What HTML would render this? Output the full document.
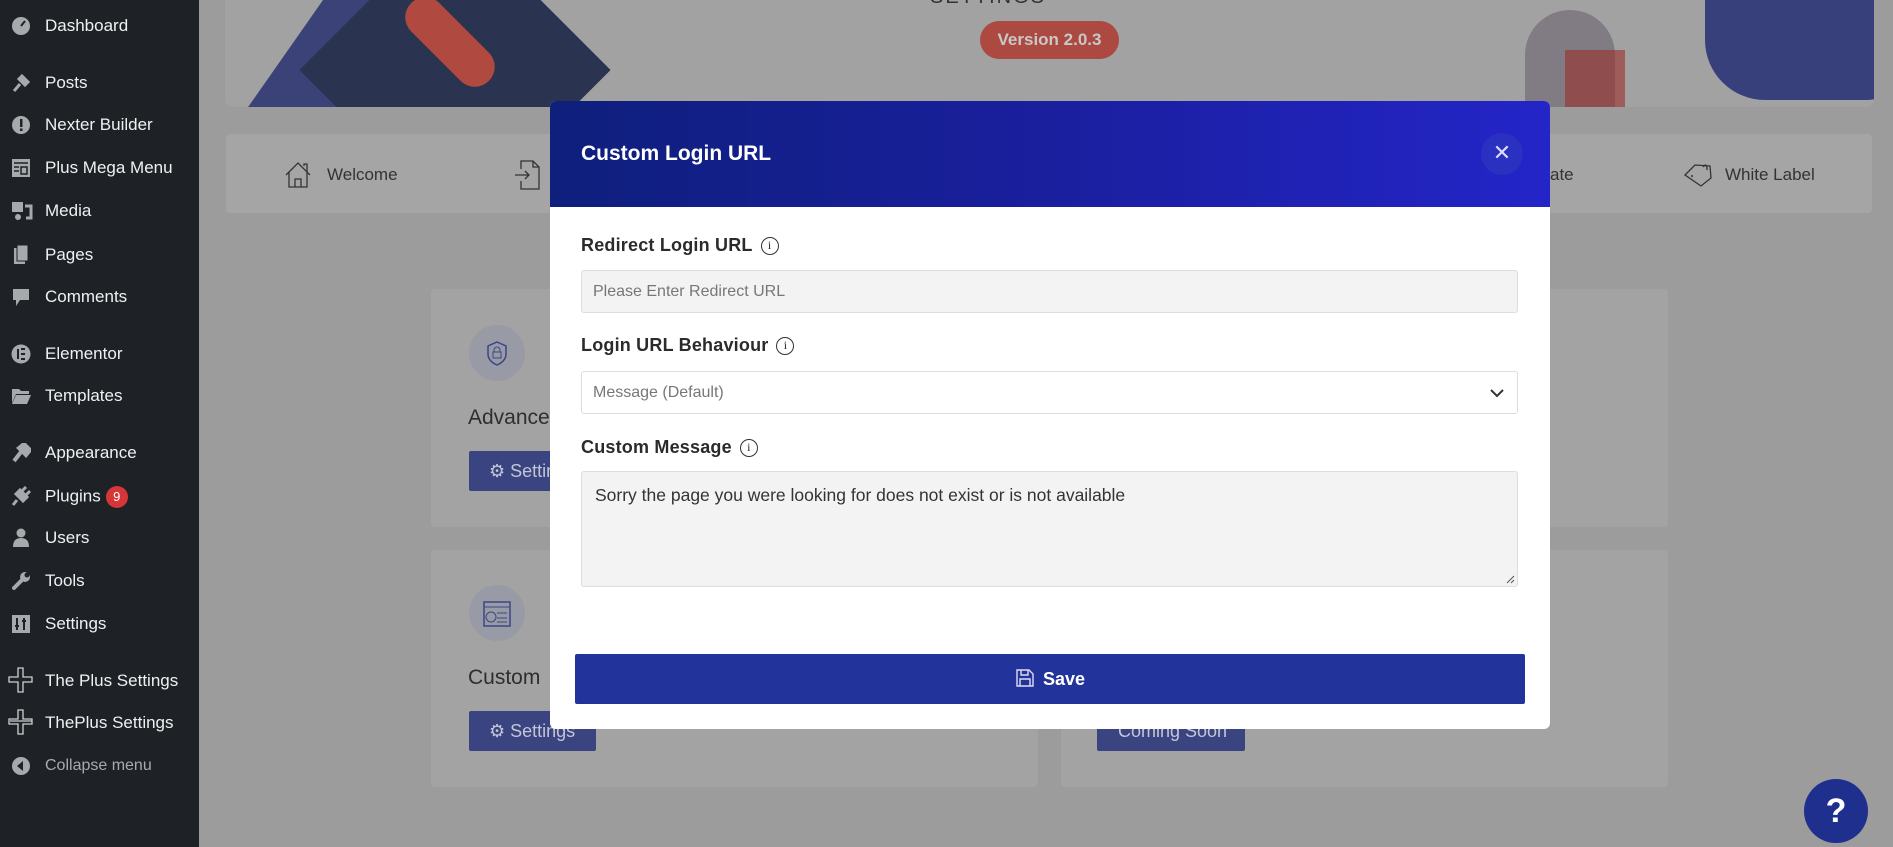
<!DOCTYPE html>
<html><head><meta charset="utf-8"><style>
*{box-sizing:border-box;margin:0;padding:0}
body{width:1893px;height:847px;overflow:hidden;background:#9c9c9c;font-family:"Liberation Sans",sans-serif;position:relative}
#sb{position:absolute;left:0;top:0;width:199px;height:847px;background:#1e2226}
.mi{position:absolute;left:45px;color:#f0f0f1;font-size:17px;line-height:20px;transform:translateY(-9px);white-space:nowrap}
.ic{position:absolute;left:11px;width:22px;height:20px;transform:translateY(-9px);color:#a7aaad}
.badge{display:inline-block;background:#d63638;color:#fff;border-radius:11px;font-size:13px;width:22px;height:22px;text-align:center;line-height:22px;margin-left:5px;vertical-align:middle}
.abs{position:absolute}
.card{position:absolute;background:#a3a3a3;border-radius:4px}
.circ{position:absolute;width:56px;height:56px;border-radius:50%;background:#989aa6}
.btn{position:absolute;background:#3a4480;color:#c4c6d6;font-size:18px;border-radius:2px;line-height:40px;padding-left:20px}
.lbl{position:absolute;left:31px;font-size:18px;font-weight:bold;color:#2b2b2b;letter-spacing:0.2px}
.info{display:inline-block;width:18px;height:18px;border:1.5px solid #333;border-radius:50%;font-size:12px;text-align:center;line-height:15px;font-family:"Liberation Serif",serif;margin-left:8px;vertical-align:2px;font-weight:normal}
.fld{position:absolute;left:31px;width:937px;border:1px solid #ddd;border-radius:3px;font-size:16px;color:#777;padding-left:11px}
</style></head><body>
<div id="sb">
<div class="ic" style="top:25px"><svg width="20" height="20"><circle cx="10" cy="10" r="9" fill="#a7aaad"/><path d="M10 10 L14 5" stroke="#1e2226" stroke-width="2"/></svg></div><div class="mi" style="top:25px">Dashboard</div>
<div class="ic" style="top:82px"><svg width="20" height="20"><path d="M3 18 L9 11 M8 6 L14 12 L17 9 L11 3Z" stroke="#a7aaad" stroke-width="3" fill="#a7aaad"/></svg></div><div class="mi" style="top:82px">Posts</div>
<div class="ic" style="top:124px"><svg width="20" height="20"><circle cx="10" cy="10" r="9" fill="#a7aaad"/><rect x="9" y="4" width="2.5" height="8" fill="#1e2226"/><rect x="9" y="13.5" width="2.5" height="2.5" fill="#1e2226"/></svg></div><div class="mi" style="top:124px">Nexter Builder</div>
<div class="ic" style="top:167px"><svg width="20" height="20"><rect x="1" y="1" width="18" height="18" fill="#a7aaad"/><path d="M3 5h14M3 9h5M3 13h5M10 9h6v7h-6z" stroke="#1e2226" stroke-width="1.5" fill="none"/></svg></div><div class="mi" style="top:167px">Plus Mega Menu</div>
<div class="ic" style="top:210px"><svg width="22" height="20"><rect x="1" y="1" width="11" height="10" fill="#a7aaad"/><path d="M14 5h6v12h-5" stroke="#a7aaad" stroke-width="3" fill="none"/><circle cx="7" cy="16" r="3" fill="#a7aaad"/></svg></div><div class="mi" style="top:210px">Media</div>
<div class="ic" style="top:254px"><svg width="20" height="20"><rect x="3" y="3" width="11" height="16" fill="#a7aaad"/><rect x="6" y="0" width="11" height="16" fill="#a7aaad" stroke="#1e2226"/></svg></div><div class="mi" style="top:254px">Pages</div>
<div class="ic" style="top:296px"><svg width="20" height="20"><path d="M2 2h16v11H9l-4 6v-6H2z" fill="#a7aaad"/></svg></div><div class="mi" style="top:296px">Comments</div>
<div class="ic" style="top:353px"><svg width="20" height="20"><circle cx="10" cy="10" r="9.5" fill="#a7aaad"/><path d="M7 5v10M10 5h4M10 10h4M10 15h4" stroke="#1e2226" stroke-width="2"/></svg></div><div class="mi" style="top:353px">Elementor</div>
<div class="ic" style="top:395px"><svg width="20" height="20"><path d="M1 3h7l2 2h8v3H5L1 17z M5 9h15l-4 9H1z" fill="#a7aaad"/></svg></div><div class="mi" style="top:395px">Templates</div>
<div class="ic" style="top:452px"><svg width="20" height="20"><path d="M3 18 L10 9 M8 5 L13 1 L19 7 L15 12Z" stroke="#a7aaad" stroke-width="4" fill="#a7aaad"/></svg></div><div class="mi" style="top:452px">Appearance</div>
<div class="ic" style="top:495px"><svg width="20" height="20"><path d="M2 19 L6 14 M5 8 L12 15 L16 11 L9 4Z M11 5 L15 1 M15 9 L19 5" stroke="#a7aaad" stroke-width="3" fill="#a7aaad"/></svg></div><div class="mi" style="top:495px">Plugins<span class="badge">9</span></div>
<div class="ic" style="top:537px"><svg width="20" height="20"><circle cx="10" cy="5" r="4.5" fill="#a7aaad"/><path d="M2 19 Q2 10 10 10 Q18 10 18 19z" fill="#a7aaad"/></svg></div><div class="mi" style="top:537px">Users</div>
<div class="ic" style="top:580px"><svg width="20" height="20"><path d="M3 17 L11 9" stroke="#a7aaad" stroke-width="4" stroke-linecap="round"/><circle cx="14" cy="6" r="5" fill="#a7aaad"/><circle cx="16" cy="4" r="2.5" fill="#1e2226"/></svg></div><div class="mi" style="top:580px">Tools</div>
<div class="ic" style="top:623px"><svg width="20" height="20"><rect x="1" y="1" width="18" height="18" fill="#a7aaad"/><path d="M6 4v12M13 4v12M4 12h4M11 7h4" stroke="#1e2226" stroke-width="2"/></svg></div><div class="mi" style="top:623px">Settings</div>
<div class="ic" style="top:680px;left:8px;width:26px;height:26px;transform:translateY(-13px)"><svg width="26" height="26"><path d="M10 1h5v9h9v5h-9v10h-5v-10h-9v-5h9z" stroke="#d0d0d0" fill="none" stroke-width="1.3"/></svg></div><div class="mi" style="top:680px">The Plus Settings</div>
<div class="ic" style="top:722px;left:8px;width:26px;height:26px;transform:translateY(-13px)"><svg width="26" height="26"><path d="M10 1h5v9h9v5h-9v10h-5v-10h-9v-5h9z M2 12h22" stroke="#d0d0d0" fill="none" stroke-width="1.3"/></svg></div><div class="mi" style="top:722px">ThePlus Settings</div>
<div class="ic" style="top:765px"><svg width="20" height="20"><circle cx="10" cy="10" r="9" fill="#a7aaad"/><path d="M12 5 L6 10 L12 15z" fill="#1e2226"/></svg></div><div class="mi" style="top:765px;color:#a7aaad;font-size:16px">Collapse menu</div>
</div>

<!-- banner -->
<div class="abs" style="left:225px;top:0;width:1649px;height:107px;background:#a2a2a2;border-radius:0 0 8px 8px;overflow:hidden">
 <div class="abs" style="left:0;top:-60px;width:170px;height:200px;background:#3a4278;transform:skewX(-35deg);transform-origin:bottom left"></div>
 <div class="abs" style="left:120px;top:-40px;width:220px;height:220px;background:#2a3450;transform:rotate(45deg)"></div>
 <div class="abs" style="left:170px;top:22px;width:110px;height:40px;background:#b04a40;border-radius:20px;transform:rotate(45deg)"></div>
 <div class="abs" style="left:1480px;top:-100px;width:220px;height:200px;background:#37407a;border-radius:60px;transform:rotate(0deg)"></div>
 <div class="abs" style="left:1300px;top:10px;width:90px;height:97px;background:#6a6270;border-radius:45px 45px 0 0;opacity:.6"></div>
 <div class="abs" style="left:1340px;top:50px;width:60px;height:57px;background:#9b2f2a;opacity:.6"></div>
 <div class="abs" style="left:705px;top:-14px;font-size:20px;color:#333;letter-spacing:2px">SETTINGS</div>
</div>
<div class="abs" style="left:980px;top:21px;width:139px;height:38px;background:#ac4941;border-radius:19px;color:#c8c8c8;font-weight:bold;font-size:17px;text-align:center;line-height:38px">Version 2.0.3</div>

<!-- nav -->
<div class="abs" style="left:226px;top:134px;width:1646px;height:79px;background:#a5a5a5;border-radius:4px"></div>
<svg class="abs" style="left:283px;top:160px" width="30" height="30"><path d="M3 15 L15 3 L27 15 M6 12v15h18V12 M12 27v-8h6v8 M21 6v-2h3v8" stroke="#333" fill="none" stroke-width="1.3"/></svg>
<div class="abs" style="left:327px;top:165px;font-size:17px;color:#333">Welcome</div>
<svg class="abs" style="left:513px;top:159px" width="30" height="32"><path d="M8 10V2h12l6 6v22H8v-8 M20 2v6h6 M2 16h14 M12 12l4 4-4 4" stroke="#333" fill="none" stroke-width="1.3"/></svg>
<div class="abs" style="left:1550px;top:165px;font-size:17px;color:#333">ate</div>
<svg class="abs" style="left:1683px;top:162px" width="30" height="26"><path d="M2 13 L12 3 L27 4 L28 16 L18 24z M20 5 Q24 0 24 8" stroke="#333" fill="none" stroke-width="1.3"/><circle cx="9" cy="14" r="1" fill="#333"/></svg>
<div class="abs" style="left:1725px;top:165px;font-size:17px;color:#333">White Label</div>

<!-- cards -->
<div class="card" style="left:431px;top:289px;width:607px;height:238px"></div>
<div class="card" style="left:1061px;top:289px;width:607px;height:238px"></div>
<div class="card" style="left:431px;top:550px;width:607px;height:237px"></div>
<div class="card" style="left:1061px;top:550px;width:607px;height:237px"></div>
<div class="circ" style="left:469px;top:325px"></div>
<svg class="abs" style="left:482px;top:338px" width="30" height="30"><path d="M15 4 L24 8 V16 Q24 23 15 27 Q6 23 6 16 V8z" stroke="#3c4585" fill="none" stroke-width="1.5"/><rect x="11" y="14" width="8" height="6" stroke="#3c4585" fill="none"/><path d="M12 14v-2a3 3 0 0 1 6 0v2" stroke="#3c4585" fill="none"/></svg>
<div class="abs" style="left:468px;top:406px;font-size:21px;color:#2e2e2e">Advance</div>
<div class="btn" style="left:469px;top:451px;width:126px;height:40px">⚙ Settings</div>
<div class="circ" style="left:469px;top:585px"></div>
<svg class="abs" style="left:482px;top:600px" width="30" height="28"><rect x="2" y="2" width="26" height="24" stroke="#3c4585" fill="none" stroke-width="1.5"/><path d="M2 7h26 M15 13h10 M15 18h10 M15 22h10" stroke="#3c4585"/><circle cx="9" cy="17" r="5" stroke="#3c4585" fill="none"/></svg>
<div class="abs" style="left:468px;top:666px;font-size:21px;color:#2e2e2e">Custom</div>
<div class="btn" style="left:469px;top:711px;width:127px;height:40px">⚙ Settings</div>
<div class="btn" style="left:1097px;top:711px;width:148px;height:40px;padding-left:21px">Coming Soon</div>

<!-- help -->
<div class="abs" style="left:1804px;top:779px;width:64px;height:64px;border-radius:50%;background:#1f2f8e;color:#fff;font-size:34px;font-weight:bold;text-align:center;line-height:64px">?</div>

<!-- modal -->
<div class="abs" style="left:550px;top:101px;width:1000px;height:628px;background:#fff;border-radius:6px;overflow:hidden">
 <div class="abs" style="left:0;top:0;width:1000px;height:106px;background:linear-gradient(90deg,#0e1f7c 0%,#1a1f9e 50%,#2425c8 100%)"></div>
 <div class="abs" style="left:31px;top:41px;font-size:21px;font-weight:bold;color:#fff">Custom Login URL</div>
 <div class="abs" style="left:931px;top:32px;width:42px;height:42px;border-radius:50%;background:#2a30c0;color:#dcdcf8;font-size:22px;text-align:center;line-height:40px">✕</div>
 <div class="lbl" style="top:134px">Redirect Login URL<span class="info">i</span></div>
 <div class="fld" style="top:169px;height:43px;background:#f3f3f3;line-height:41px">Please Enter Redirect URL</div>
 <div class="lbl" style="top:234px">Login URL Behaviour<span class="info">i</span></div>
 <div class="fld" style="top:270px;height:43px;background:#fff;line-height:41px">Message (Default)
  <svg class="abs" style="right:12px;top:16px" width="16" height="10"><path d="M2 2 L8 8 L14 2" stroke="#333" fill="none" stroke-width="2"/></svg></div>
 <div class="lbl" style="top:336px">Custom Message<span class="info">i</span></div>
 <div class="fld" style="top:370px;height:116px;background:#f3f3f3;color:#333;padding-top:13px;padding-left:13px;font-size:17.5px">Sorry the page you were looking for does not exist or is not available
  <svg class="abs" style="right:2px;bottom:2px" width="10" height="10"><path d="M9 2 L2 9 M9 6 L6 9" stroke="#555"/></svg></div>
 <div class="abs" style="left:25px;top:553px;width:950px;height:50px;background:#22349c;border-radius:2px;color:#fff;font-weight:bold;font-size:18px;text-align:center;line-height:50px">
  <svg style="vertical-align:-3px;margin-right:8px" width="20" height="20"><path d="M2 2h12l4 4v12H2z M6 2v5h7V2 M5 18v-7h10v7" stroke="#dde" fill="none" stroke-width="1.4"/></svg>Save</div>
</div>
</body></html>
